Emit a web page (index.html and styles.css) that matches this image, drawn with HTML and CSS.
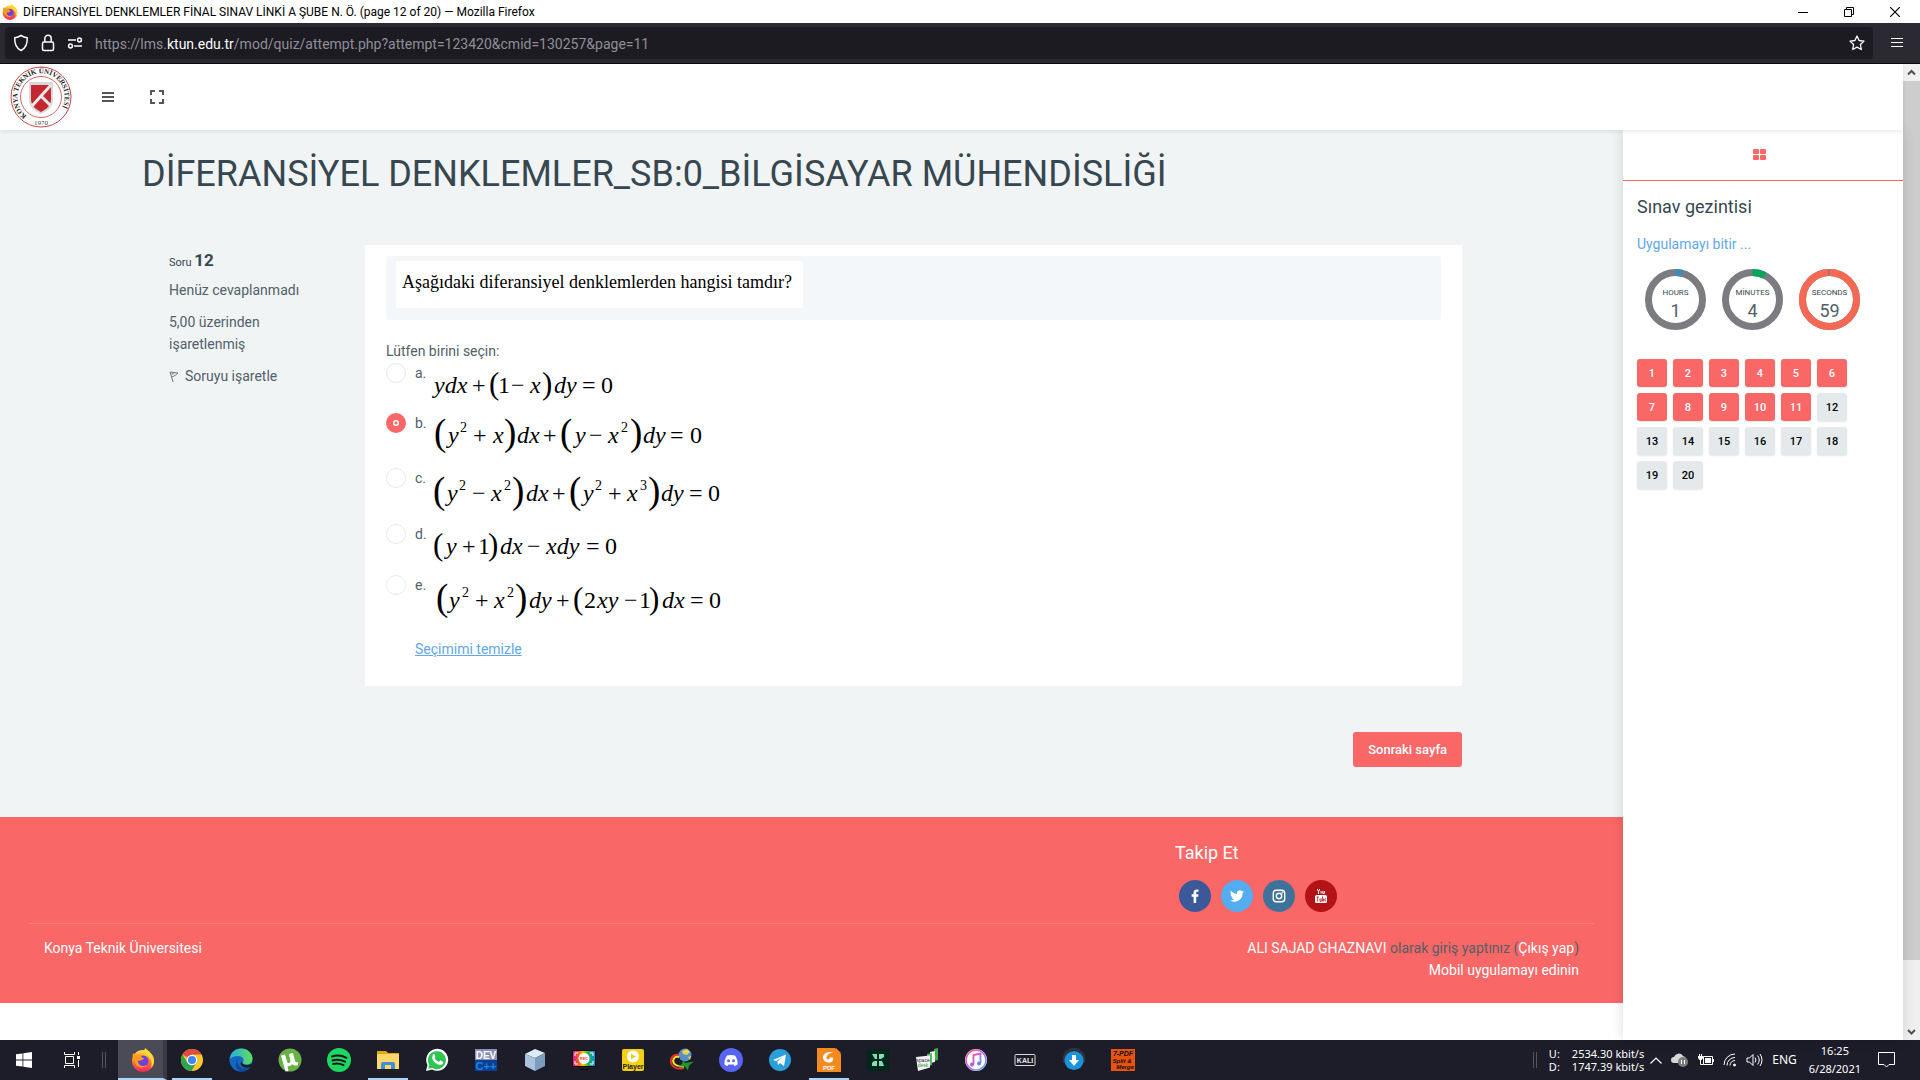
FILE: index.html
```html
<!DOCTYPE html>
<html lang="tr">
<head>
<meta charset="utf-8">
<title>DİFERANSİYEL DENKLEMLER FİNAL SINAV LİNKİ A ŞUBE N. Ö. (page 12 of 20)</title>
<link rel="stylesheet" href="styles.css">
</head>
<body>
<svg class="defs" aria-hidden="true">
  <defs>
    <linearGradient id="ff" x1="0" y1="0" x2="0" y2="1"><stop offset="0" stop-color="#ffe14a"/><stop offset=".45" stop-color="#ff8a16"/><stop offset="1" stop-color="#f0246a"/></linearGradient>
    <linearGradient id="edgeA" x1="0" y1="0" x2="1" y2="0"><stop offset="0" stop-color="#2aa9e8"/><stop offset="1" stop-color="#5fe05a"/></linearGradient>
    <linearGradient id="rainbow" x1="0" y1="0" x2="1" y2="0"><stop offset="0" stop-color="#e2189b"/><stop offset=".25" stop-color="#ff5a1f"/><stop offset=".45" stop-color="#ffc400"/><stop offset=".7" stop-color="#1fb455"/><stop offset="1" stop-color="#1587e0"/></linearGradient>
    <linearGradient id="tunes" x1="0" y1="0" x2="1" y2="1"><stop offset="0" stop-color="#fb4f7c"/><stop offset=".5" stop-color="#c05cf0"/><stop offset="1" stop-color="#41b6f5"/></linearGradient>
    <symbol id="firefox" viewBox="0 0 24 24">
      <circle cx="12" cy="13" r="11" fill="url(#ff)"/>
      <path d="M14 0c4 3 9 7 9 13 0 3-1 5-3 7 2-7-1-11-5-13-2-2-2-5-1-7z" fill="#ffd83a"/>
      <circle cx="12" cy="13" r="5.500" fill="#7040dc"/>
      <path d="M2 5c1 1 2 2 4 2 2-1 4-1 5 0-1 1-1 3 2 3-1 3-4 2-6 3 0 5 5 6 9 4-3 4-10 3-12-2-2-3-3-7-2-10z" fill="#ff9a1c"/>
    </symbol>
  </defs>
</svg>

<header class="titlebar">
  <svg class="app-icon" viewBox="0 0 24 24"><use href="#firefox"/></svg>
  <span class="window-title">DİFERANSİYEL DENKLEMLER FİNAL SINAV LİNKİ A ŞUBE N. Ö. (page 12 of 20) — Mozilla Firefox</span>
  <div class="window-controls">
    <button aria-label="Minimize"><svg width="10" height="10"><path d="M0 5.500h10" stroke="#000"/></svg></button>
    <button aria-label="Restore"><svg width="10" height="10" fill="none" stroke="#000"><path d="M.5 2.500h7v7h-7zM2.500 2.500v-2h7v7h-2"/></svg></button>
    <button aria-label="Close"><svg width="10" height="10"><path d="M0 0l10 10M10 0L0 10" stroke="#000" stroke-width="1.200"/></svg></button>
  </div>
</header>

<div class="toolbar">
  <div class="urlbar">
    <svg width="16" height="18" viewBox="0 0 16 18" fill="none" stroke="#fbfbfe" stroke-width="1.500"><path d="M8 1.500c2 1.300 4 2 6.200 2.200C14.500 9 13 14 8 16.500 3 14 1.500 9 1.800 3.700 4 3.500 6 2.800 8 1.500z"/></svg>
    <svg width="14" height="18" viewBox="0 0 14 18" fill="none" stroke="#fbfbfe" stroke-width="1.500"><rect x="1.500" y="8" width="11" height="8.500" rx="1.500"/><path d="M3.800 8V4.500a3.200 3.200 0 0 1 6.400 0V8"/></svg>
    <svg width="16" height="12" viewBox="0 0 16 12" fill="none" stroke="#fbfbfe" stroke-width="1.500"><path d="M1 3h8M7 9h8"/><circle cx="12.500" cy="3" r="1.900"/><circle cx="3.500" cy="9" r="1.900"/></svg>
    <div class="url">https://lms.<b>ktun.edu.tr</b>/mod/quiz/attempt.php?attempt=123420&amp;cmid=130257&amp;page=11</div>
    <svg class="star" width="16" height="16" viewBox="0 0 16 16" fill="none" stroke="#fbfbfe" stroke-width="1.300" stroke-linejoin="round"><path d="M8 1l2.100 4.500 4.900.6-3.600 3.400.9 5L8 12.100 3.700 14.500l.9-5L1 6.100l4.900-.6z"/></svg>
  </div>
  <button class="app-menu" aria-label="Menu"><svg width="12" height="11"><path d="M0 1.500h12M0 5.500h12M0 9.500h12" stroke="#fbfbfe"/></svg></button>
</div>

<div class="viewport">
  <div class="page">
    <nav class="navbar">
      <svg class="logo" viewBox="0 0 62 62">
        <circle cx="31" cy="31" r="30" fill="#fff" stroke="#c8454d"/>
        <circle cx="31" cy="31" r="20.500" fill="none" stroke="#d2686e"/>
        <path id="ring" d="M17.500 50.500A23.700 23.700 0 1 1 44.500 50.500" fill="none"/>
        <text class="logo-ring"><textPath href="#ring" startOffset="1">KONYA TEKNİK ÜNİVERSİTESİ</textPath></text>
        <text class="logo-year" x="31" y="59" text-anchor="middle">1970</text>
        <path d="M19 16h24v18c0 7-5 11-12 14-7-3-12-7-12-14z" fill="#d8d8da"/>
        <path d="M21 19h20v14c0 6-4 10-10 13-6-3-10-7-10-13z" fill="#c3272f"/>
        <path d="M22 40L41 19M31 30L41 40" stroke="#e9e9ea" stroke-width="3" fill="none"/>
      </svg>
      <button class="nav-btn" aria-label="Menü"><svg width="12" height="10"><path d="M0 1h12M0 5h12M0 9h12" stroke="#555" stroke-width="2"/></svg></button>
      <button class="nav-btn" aria-label="Tam ekran"><svg width="14" height="14" fill="none" stroke="#555" stroke-width="2"><path d="M1 5V1h4M9 1h4v4M13 9v4H9M5 13H1V9"/></svg></button>
    </nav>

    <div class="columns">
      <main class="main">
        <div class="content">
          <h1>DİFERANSİYEL DENKLEMLER_SB:0_BİLGİSAYAR MÜHENDİSLİĞİ</h1>
          <form class="question">
            <section class="info">
              <h3>Soru <b>12</b></h3>
              <p>Henüz cevaplanmadı</p>
              <p>5,00 üzerinden işaretlenmiş</p>
              <p><a class="flag" href="#"><svg width="10" height="13" viewBox="0 0 10 13"><path d="M1 2l8 1-3 2.500L3 7M1 2l3 10" fill="none" stroke="#777"/><path d="M2 2.500l4 .8-3 2z" fill="#aaa"/></svg>Soruyu işaretle</a></p>
            </section>
            <div class="card">
              <div class="formulation"><p>Aşağıdaki diferansiyel denklemlerden hangisi tamdır?</p></div>
              <fieldset>
                <legend>Lütfen birini seçin:</legend>
                <label class="option h50"><input type="radio" name="answer"><span>a.</span>
                  <svg class="math" width="300" height="48"><text y="30"><tspan class="v" x="3">ydx</tspan><tspan x="41">+</tspan><tspan class="p" x="58" y="31">(</tspan><tspan x="67" y="30">1</tspan><tspan x="80">−</tspan><tspan class="v" x="99">x</tspan><tspan class="p" x="111" y="31">)</tspan><tspan class="v" x="123" y="30">dy</tspan><tspan x="151">=</tspan><tspan x="170">0</tspan></text></svg></label>
                <label class="option h55"><input type="radio" name="answer" checked><span>b.</span>
                  <svg class="math" width="300" height="48"><text y="30"><tspan class="q" x="3" y="32">(</tspan><tspan class="v" x="17" y="30">y</tspan><tspan class="s" x="29" y="19">2</tspan><tspan x="42" y="30">+</tspan><tspan class="v" x="62">x</tspan><tspan class="q" x="73" y="32">)</tspan><tspan class="v" x="86" y="30">dx</tspan><tspan x="112">+</tspan><tspan class="q" x="129" y="32">(</tspan><tspan class="v" x="144" y="30">y</tspan><tspan x="158">−</tspan><tspan class="v" x="177">x</tspan><tspan class="s" x="190" y="19">2</tspan><tspan class="q" x="199" y="32">)</tspan><tspan class="v" x="212" y="30">dy</tspan><tspan x="239">=</tspan><tspan x="259">0</tspan></text></svg></label>
                <label class="option h56"><input type="radio" name="answer"><span>c.</span>
                  <svg class="math" width="300" height="48"><text y="33"><tspan class="q" x="2" y="35">(</tspan><tspan class="v" x="16" y="33">y</tspan><tspan class="s" x="28" y="22">2</tspan><tspan x="41" y="33">−</tspan><tspan class="v" x="60">x</tspan><tspan class="s" x="73" y="22">2</tspan><tspan class="q" x="81" y="35">)</tspan><tspan class="v" x="95" y="33">dx</tspan><tspan x="121">+</tspan><tspan class="q" x="138" y="35">(</tspan><tspan class="v" x="152" y="33">y</tspan><tspan class="s" x="164" y="22">2</tspan><tspan x="177" y="33">+</tspan><tspan class="v" x="196">x</tspan><tspan class="s" x="209" y="22">3</tspan><tspan class="q" x="217" y="35">)</tspan><tspan class="v" x="230" y="33">dy</tspan><tspan x="258">=</tspan><tspan x="277">0</tspan></text></svg></label>
                <label class="option h51"><input type="radio" name="answer"><span>d.</span>
                  <svg class="math" width="300" height="48"><text y="30"><tspan class="p" x="2" y="31">(</tspan><tspan class="v" x="15" y="30">y</tspan><tspan x="31">+</tspan><tspan x="47">1</tspan><tspan class="p" x="57" y="31">)</tspan><tspan class="v" x="69" y="30">dx</tspan><tspan x="96">−</tspan><tspan class="v" x="115">xdy</tspan><tspan x="155">=</tspan><tspan x="174">0</tspan></text></svg></label>
                <label class="option h51"><input type="radio" name="answer"><span>e.</span>
                  <svg class="math" width="300" height="48"><text y="33"><tspan class="q" x="5" y="35">(</tspan><tspan class="v" x="18" y="33">y</tspan><tspan class="s" x="31" y="22">2</tspan><tspan x="44" y="33">+</tspan><tspan class="v" x="63">x</tspan><tspan class="s" x="76" y="22">2</tspan><tspan class="q" x="84" y="35">)</tspan><tspan class="v" x="98" y="33">dy</tspan><tspan x="125">+</tspan><tspan class="p" x="142" y="34">(</tspan><tspan x="153" y="33">2</tspan><tspan class="v" x="166">xy</tspan><tspan x="193">−</tspan><tspan x="208">1</tspan><tspan class="p" x="218" y="34">)</tspan><tspan class="v" x="231" y="33">dx</tspan><tspan x="259">=</tspan><tspan x="278">0</tspan></text></svg></label>
              </fieldset>
              <a class="clear" href="#">Seçimimi temizle</a>
            </div>
            <button class="next" type="button">Sonraki sayfa</button>
          </form>
        </div>

        <footer class="footer">
          <div class="follow">
            <h4>Takip Et</h4>
            <div class="social">
              <a class="fb" href="#" aria-label="Facebook"><svg width="14" height="14" viewBox="0 0 14 14"><path d="M10.500.5v2.300H9.200c-.8 0-1 .4-1 1v1.500h2.300l-.3 2.400h-2V14H5.600V7.700h-2V5.300h2V3.500C5.600 1.500 6.900.4 8.700.4c.8 0 1.600.1 1.800.1z" fill="#fff"/></svg></a>
              <a class="tw" href="#" aria-label="Twitter"><svg width="14" height="14" viewBox="0 0 24 24"><path d="M24 4.600c-.9.400-1.800.7-2.800.8 1-.6 1.800-1.600 2.200-2.700-1 .6-2 1-3.100 1.200a4.900 4.900 0 0 0-8.400 4.500C7.700 8.200 4.100 6.300 1.700 3.200a4.900 4.900 0 0 0 1.500 6.600c-.8 0-1.600-.2-2.200-.6v.1a4.900 4.900 0 0 0 3.900 4.800c-.7.200-1.500.2-2.200.1a4.900 4.900 0 0 0 4.600 3.400A9.900 9.900 0 0 1 0 19.500 14 14 0 0 0 21.500 7.100c1-.7 1.800-1.500 2.500-2.500z" fill="#fff"/></svg></a>
              <a class="ig" href="#" aria-label="Instagram"><svg width="14" height="14" viewBox="0 0 14 14" fill="none" stroke="#fff" stroke-width="1.400"><rect x="1.300" y="1.300" width="11.400" height="11.400" rx="3"/><circle cx="7" cy="7" r="2.700"/><circle cx="10.400" cy="3.600" r=".3"/></svg></a>
              <a class="yt" href="#" aria-label="YouTube"><svg width="14" height="16" viewBox="0 0 14 16"><rect x="1" y="7" width="12" height="8" rx="1.500" fill="#fff"/><path d="M3.300 1l1.200 2.700L5.700 1M4.500 3.500V6M7 3v2.500M8.800 3v2.500h1.500V3" stroke="#fff" fill="none"/><path d="M2.500 9h2.300M3.700 9v4.500M6 10.500v3h1.200v-3M8.500 8.500v5M9 11h.8v2H9M11.800 12.800h-.8v-2h.8" stroke="#b31217" stroke-width=".8" fill="none"/></svg></a>
            </div>
          </div>
          <div class="footer-bottom">
            <a href="#">Konya Teknik Üniversitesi</a>
            <div class="login"><a href="#">ALI SAJAD GHAZNAVI</a> olarak giriş yaptınız (<a href="#">Çıkış yap</a>)<br><a href="#">Mobil uygulamayı edinin</a></div>
          </div>
        </footer>
      </main>

      <aside class="drawer">
        <div class="tab"><svg width="13" height="11" fill="#fa6767"><rect width="6" height="5" rx="1"/><rect x="7" width="6" height="5" rx="1"/><rect y="6" width="6" height="5" rx="1"/><rect x="7" y="6" width="6" height="5" rx="1"/></svg></div>
        <div class="drawer-body">
          <h5>Sınav gezintisi</h5>
          <a class="finish" href="#">Uygulamayı bitir ...</a>
          <div class="timer">
            <div class="dial"><svg viewBox="0 0 61 61"><circle cx="30.500" cy="30.500" r="27" stroke="#7a7c80"/><circle cx="30.500" cy="30.500" r="27" stroke="#3c8dbc" pathLength="100" stroke-dasharray="4.200 100"/></svg><span>HOURS</span><strong>1</strong></div>
            <div class="dial"><svg viewBox="0 0 61 61"><circle cx="30.500" cy="30.500" r="27" stroke="#7a7c80"/><circle cx="30.500" cy="30.500" r="27" stroke="#00a65a" pathLength="100" stroke-dasharray="7.500 100"/></svg><span>MİNUTES</span><strong>4</strong></div>
            <div class="dial"><svg viewBox="0 0 61 61"><circle cx="30.500" cy="30.500" r="27" stroke="#7a7c80"/><circle cx="30.500" cy="30.500" r="27" stroke="#f56954" pathLength="100" stroke-dasharray="99.200 100"/></svg><span>SECONDS</span><strong>59</strong></div>
          </div>
          <div class="qnav">
            <a class="done" href="#">1</a><a class="done" href="#">2</a><a class="done" href="#">3</a><a class="done" href="#">4</a><a class="done" href="#">5</a><a class="done" href="#">6</a>
            <a class="done" href="#">7</a><a class="done" href="#">8</a><a class="done" href="#">9</a><a class="done" href="#">10</a><a class="done" href="#">11</a><a href="#">12</a>
            <a href="#">13</a><a href="#">14</a><a href="#">15</a><a href="#">16</a><a href="#">17</a><a href="#">18</a>
            <a href="#">19</a><a href="#">20</a>
          </div>
        </div>
      </aside>
    </div>
  </div>
  <div class="scrollbar">
    <svg width="17" height="17"><path d="M5 10.500l3.500-3.500 3.500 3.500" fill="none" stroke="#505050" stroke-width="2"/></svg>
    <div class="thumb"></div>
    <svg width="17" height="17"><path d="M5 7l3.500 3.500L12 7" fill="none" stroke="#505050" stroke-width="2"/></svg>
  </div>
</div>

<div class="taskbar">
  <div class="sys"><svg width="16" height="16" fill="#fff"><path d="M0 2.300l6.500-.9v6.200H0zM7.300 1.300L16 0v7.600H7.300zM0 8.400h6.500v6.200L0 13.700zM7.300 8.400H16V16l-8.700-1.200z"/></svg></div>
  <div class="sys"><svg width="17" height="16" fill="none" stroke="#fff"><path d="M.5 0v2.500h10V0M.5 16v-2.500h10V16M1.500 4.500h8v7h-8zM14.500 0v3M14.500 8v7"/><path d="M13 4h3v3h-3z" fill="#fff" stroke="none"/></svg></div>
  <div class="grip"></div>
  <div class="apps">
    <div class="app active multi"><svg viewBox="0 0 24 24"><use href="#firefox"/></svg></div>
    <div class="app open"><svg viewBox="0 0 24 24"><circle cx="12" cy="12" r="11" fill="#fbc52e"/><path d="M12 12L2.500 6.500A11 11 0 0 1 21.500 6.500H12z" fill="#e04a3f"/><path d="M2.500 6.500A11 11 0 0 0 11.500 23l4.800-8.500L7.500 15z" fill="#2ea350"/><circle cx="12" cy="12" r="5.200" fill="#fff"/><circle cx="12" cy="12" r="4.100" fill="#4285f4"/></svg></div>
    <div class="app"><svg viewBox="0 0 24 24"><circle cx="12" cy="12" r="11.500" fill="#1269bd"/><path d="M.6 11C1.500 4.500 6.500.5 12 .5c7 0 11.500 5 11.500 10 0 4-3 6-6 6-2.500 0-4-1.500-3.500-2.500 2-3-1-6-5-6-4 0-7 1.500-8.400 3z" fill="url(#edgeA)"/><path d="M9 11c-2 5 2 9.500 7 9.500 3 0 5-1 6-2-2 3-5 5-9 5C7 23 5 16 9 11z" fill="#0c4a9a"/><path d="M13 13c-1 3 3 5.500 9.500 3l1 1-1.500 2c-5 2-10.500 0-10.500-4z" fill="#1d1c29"/></svg></div>
    <div class="app"><svg viewBox="0 0 24 24"><circle cx="12" cy="12" r="11.500" fill="#69b045"/><path d="M3 7.500l4-1 2 7c.5 2 3 2 3.500 0L11 6l4-1 2 8c.5 1.500 2 1.500 3 1v3c-2.500 1-5 .5-6-1-1 2-3 2.500-4.500 2l1 5-3 .5z" fill="#fff"/></svg></div>
    <div class="app"><svg viewBox="0 0 24 24"><circle cx="12" cy="12" r="12" fill="#1ed760"/><path d="M5 8.500c5-1.500 10-1 14.500 1.300M5.500 12.500c4-1.200 8.500-.8 12.500 1.200M6 16c3.500-.8 7-.6 10.500 1.100" fill="none" stroke="#15151c" stroke-width="2" stroke-linecap="round"/></svg></div>
    <div class="app open"><svg viewBox="0 0 24 24"><path d="M1 3h9l2 2h11v16H1z" fill="#e5a50a"/><path d="M1 6h22v15H1z" fill="#ffd76b"/><path d="M5 21v-5q0-2 2-2h10q2 0 2 2v5h-4v-4H9v4z" fill="#3f8fd8"/></svg></div>
    <div class="app"><svg viewBox="0 0 24 24"><path d="M1 23l1.500-6A11 11 0 1 1 7 21.500z" fill="#fff"/><path d="M3.200 20.800l1-4A9 9 0 1 1 7.500 20z" fill="#2fc351"/><path d="M8 6.500c1-1 1.500-.5 2 .8.600 1.500.5 1.500-.5 2.700 1 2 2.500 3.200 4.500 4 1.200-1.500 1.300-1.800 2.500-1 1.800.8 2 1 1.500 2.200-.7 1.800-3 2-5 1.200-3.500-1.400-7.500-5.400-5-9.900z" fill="#fff"/></svg></div>
    <div class="app"><svg viewBox="0 0 24 24"><rect x="1" y="1" width="22" height="12" fill="#8c8fb5"/><rect x="1" y="12" width="22" height="11" fill="#0b3f93"/><text class="t-dev" x="12" y="11" text-anchor="middle">DEV</text><text class="t-cpp" x="12" y="22" text-anchor="middle">C++</text></svg></div>
    <div class="app"><svg viewBox="0 0 24 24"><path d="M2 6l10-5 10 4-10 5z" fill="#dcebf5"/><path d="M2 6l10 4v13L2 18z" fill="#a8c3dc"/><path d="M22 5v13l-10 5V10z" fill="#7d9dbd"/></svg></div>
    <div class="app"><svg viewBox="0 0 24 24"><rect x="0" y="2" width="24" height="17" fill="#0b0b0e"/><rect x="1" y="3" width="22" height="15" fill="url(#rainbow)"/><path d="M3 8V5h3M18 5h3v3M21 13v3h-3M6 16H3v-3" fill="none" stroke="#fff"/><circle cx="12" cy="10.500" r="5.500" fill="#fff"/><text class="t-rec" x="12" y="12" text-anchor="middle">REC</text><path d="M8 21h8v1H8z" fill="#000"/></svg></div>
    <div class="app"><svg viewBox="0 0 24 24"><rect x="1" y="1" width="22" height="22" rx="2" fill="#f5cf16"/><circle cx="12" cy="8.500" r="6" fill="#fff"/><path d="M10 5.500l5 3-5 3z" fill="#f5cf16"/><text class="t-player" x="12" y="21" text-anchor="middle">Player</text></svg></div>
    <div class="app"><svg viewBox="0 0 24 24"><circle cx="15" cy="7" r="6.500" fill="#5a8fc8"/><path d="M12 3l5-2 3 3-3 3-4-1zM18 9l3-1-1 4z" fill="#e8d84a"/><path d="M9 7C2 6-1 12 2 17c3 4 8 4 12 3" fill="none" stroke="#e5312b" stroke-width="2"/><path d="M9 9C4 8 2 12 4 15.500c2 3 6 3 10 3" fill="none" stroke="#f6e22f" stroke-width="2"/><path d="M13 12l2 3 9-1.500-5 4-1 5-3-4-8 0c4-1 6-3 6-6.500z" fill="#1c9a2c"/></svg></div>
    <div class="app"><svg viewBox="0 0 24 24"><circle cx="12" cy="12" r="12" fill="#5865f2"/><path d="M8 7.500c2.500-.7 5.500-.7 8 0 2 3 3 6 2.500 9-1 .8-2 1.200-3 1.500l-1-1.500h-5l-1 1.500c-1 0-2-.6-3-1.500-.3-3 .5-6 2.500-9z" fill="#fff"/><circle cx="9.500" cy="12.800" r="1.500" fill="#5865f2"/><circle cx="14.500" cy="12.800" r="1.500" fill="#5865f2"/></svg></div>
    <div class="app"><svg viewBox="0 0 24 24"><circle cx="12" cy="12" r="11" fill="#2a9fda"/><path d="M5 12l13-5.500L16 18l-4-3-2 2-.7-3.500L15 9l-7 4z" fill="#fff"/></svg></div>
    <div class="app open"><svg viewBox="0 0 24 24"><path d="M0 0h18l6 6v18H0z" fill="#f58a1f"/><path d="M19 0l5 5h-5z" fill="#f58a1f"/><path d="M16.500 4.500C10 2.500 6 6 6 9.500S9.500 15 13 14.500c3-.5 3.500-3 3-5h-4c1 0 1 1.500 0 2-2 .5-3-1-2.500-2.500C10 6.500 13 5 16.500 4.500z" fill="#fff"/><text class="t-pdf" x="12" y="22" text-anchor="middle">PDF</text></svg></div>
    <div class="app"><svg viewBox="0 0 24 24"><rect x="1" y="1" width="22" height="22" rx="3" fill="#02261c"/><path d="M6 6h5v5H9zM18 6h-5v5h2l3-2zM6 18h5v-5H8l-2 2zM18 18h-5v-5h3z" fill="#7be0b6"/></svg></div>
    <div class="app"><svg viewBox="0 0 24 24"><path d="M19 1l4-1v12l-4 1z" fill="#3cae46"/><path d="M15 4l5-1v11l-5 1z" fill="#fff"/><path d="M12 6l5-1v12l-5 1z" fill="#58b85f"/><path d="M1 9l14-1.500v12L3 23z" fill="#f2f2f2"/><text class="t-space" x="8" y="14" text-anchor="middle">space</text><text class="t-desk" x="8" y="19" text-anchor="middle">desk</text></svg></div>
    <div class="app"><svg viewBox="0 0 24 24"><circle cx="12" cy="12" r="11" fill="#fff"/><circle cx="12" cy="12" r="10" fill="none" stroke="url(#tunes)" stroke-width="1.500"/><path d="M9.500 16V7l7-1.500V15" fill="none" stroke="url(#tunes)" stroke-width="1.800"/><circle cx="8" cy="16.500" r="2" fill="#a85cf0"/><circle cx="15" cy="15.500" r="2" fill="#6a7cf0"/></svg></div>
    <div class="app"><svg viewBox="0 0 24 24"><rect x="2" y="6.500" width="20" height="11" rx="1" fill="none" stroke="#d8d8dc"/><text class="t-kali" x="12" y="15" text-anchor="middle">KALI</text></svg></div>
    <div class="app"><svg viewBox="0 0 24 24"><path d="M2 15V11a10 10 0 0 1 20 0v4" fill="none" stroke="#30343c" stroke-width="2.500"/><circle cx="12" cy="12.500" r="9.500" fill="#1b93dc"/><path d="M10 7h4v5h3l-5 6-5-6h3z" fill="#fff"/></svg></div>
    <div class="app"><svg viewBox="0 0 24 24"><rect y="1" width="24" height="22" fill="#e8530f"/><text class="t-seven" x="12" y="8" text-anchor="middle">7-PDF</text><text class="t-split" x="11" y="15" text-anchor="middle">Split &amp;</text><text class="t-split" x="14" y="21" text-anchor="middle">Merge</text></svg></div>
  </div>
  <div class="tray">
    <div class="grip"></div>
    <div class="net"><span>U:</span><span>2534.30 kbit/s</span><span>D:</span><span>1747.39 kbit/s</span></div>
    <svg width="12" height="7"><path d="M.5 6.500L6 1l5.500 5.500" fill="none" stroke="#fff" stroke-width="1.200"/></svg>
    <svg width="18" height="16"><path d="M3 11a3 3 0 0 1 0-6 5 5 0 0 1 9-1 4 4 0 0 1 2 7z" fill="#d7d7da"/><circle cx="12" cy="10" r="5" fill="#7d7d80"/><path d="M10.500 8v4M13.500 8v4" stroke="#fff"/></svg>
    <svg width="16" height="12" fill="none" stroke="#fff"><path d="M5.500 2.500h9v8h-9zM15.500 5v3M2.500 6v4.500h3M1.500 0v2M3.500 0v2"/><path d="M7 4h6v5H7zM0 2h5v2L3.500 6h-2L0 4z" fill="#fff" stroke="none"/></svg>
    <svg width="14" height="14" fill="none" stroke="#fff"><path d="M1 12A11 11 0 0 1 12 1M4 12.500a8 8 0 0 1 8-8M7 12.500a5 5 0 0 1 5-5"/><circle cx="11.500" cy="12" r="1" fill="#fff"/></svg>
    <svg width="17" height="14" fill="none" stroke="#fff"><path d="M1 5h2.500L7 1.500v11L3.500 9H1zM9 4.500q2 2.500 0 5M11.500 2.500q3.500 4.500 0 9M14 1q4 6 0 12"/></svg>
    <span class="lang">ENG</span>
    <div class="clock"><span>16:25</span><span>6/28/2021</span></div>
    <svg class="note" width="17" height="16" fill="none" stroke="#fff"><path d="M.5.500h16v12h-5.500L8.500 15 6 12.500H.5z"/></svg>
  </div>
</div>
</body>
</html>
```
FILE: styles.css
```css
* { box-sizing: border-box; }
html, body { height: 100%; margin: 0; }
body { display: flex; flex-direction: column; overflow: hidden; font: 14px/22px Roboto, sans-serif; color: #526069; background: #fff; }
button { border: 0; background: none; padding: 0; font: inherit; color: inherit; }
a { color: #62a8ea; text-decoration: none; }
h1, h3, h4, h5, p { margin: 0; font-weight: 400; color: #37474f; }
svg { display: block; flex: none; }
.defs { position: absolute; width: 0; height: 0; }

.titlebar { display: flex; align-items: center; gap: 5px; height: 23px; padding: 0 2px; color: #000; font: 12px/16px Roboto, sans-serif; flex: none; }
.app-icon { width: 16px; height: 16px; }
.window-title { flex: 1; }
.window-controls { display: flex; height: 20px; }
.window-controls button { width: 46px; display: grid; place-items: center; }

.toolbar { display: flex; align-items: center; height: 41px; padding: 0 0 1px 5px; background: #2b2a33; border-bottom: 1px solid #0c0c0d; flex: none; }
.urlbar { flex: 1; height: 32px; display: flex; align-items: center; gap: 12px; padding: 0 8px; border-radius: 4px; background: #1c1b22; }
.url { flex: 1; padding-top: 2px; font: 14px/20px Roboto, sans-serif; color: #8f8f98; }
.url b { font-weight: 400; color: #fbfbfe; }
.app-menu { width: 47px; display: grid; place-items: center; }

.viewport { flex: 1; min-height: 0; display: flex; }
.page { flex: 1; display: flex; flex-direction: column; min-width: 0; }
.navbar { height: 66px; flex: none; display: flex; align-items: center; padding-left: 10px; background: #fff; box-shadow: 0 2px 4px rgba(0,0,0,.08); z-index: 2; }
.logo { width: 62px; height: 62px; margin-right: 11px; }
.logo-ring { font: 700 7px "Liberation Serif", serif; fill: #222; }
.logo-year { font: 7px "Liberation Serif", serif; fill: #444; }
.nav-btn { width: 49px; height: 40px; display: grid; place-items: center; }
.columns { flex: 1; display: flex; min-height: 0; }
.main { flex: 1; min-width: 0; }
.content { background: #f0f4f5; padding: 21px 161px 50px 142px; }
h1 { font-size: 36px; line-height: 46px; color: #37474f; }
.question { display: grid; grid-template-columns: 223px 1fr; padding-top: 48px; }
.info { padding: 3px 60px 0 27px; }
.info h3 { font-size: 11px; line-height: 24px; margin-bottom: 4px; }
.info b { font-size: 17px; font-weight: 700; }
.info p { color: #526069; margin-bottom: 10px; }
.flag { display: flex; align-items: center; gap: 6px; color: #526069; }
.card { background: #fff; padding: 11px 21px 26px; }
.formulation { background: #f3f7fa; border-radius: 3px; padding: 5px 10px 12px; margin-bottom: 20px; }
.formulation p { width: max-content; min-width: 407px; height: 47px; padding: 9px 6px; background: #fff; color: #000; font: 18px/24px "Liberation Serif", serif; }
fieldset { border: 0; margin: 0; padding: 0; min-width: 0; }
legend { padding: 0; }
.option { display: flex; align-items: flex-start; gap: 9px; }
.option span { width: 14px; }
.option input { appearance: none; width: 20px; height: 20px; margin: 1px 0 0; border: 1px solid #e4eaec; border-radius: 50%; background: #fff; flex: none; }
.option input:checked { border: 7px solid #fa6767; background: radial-gradient(circle, #fa6767 1px, #fff 2px); }
.math { margin: 1px 0 0 -7px; overflow: visible; }
.math text { font: 24px "Liberation Serif", serif; fill: #000; }
.math .v { font-style: italic; }
.math .s { font-size: 14px; }
.math .p { font-size: 31px; }
.math .q { font-size: 37px; }
.h50 { height: 50px; }
.h51 { height: 51px; }
.h55 { height: 55px; }
.h56 { height: 56px; }
.clear { display: block; width: max-content; margin: 13px 0 0 29px; text-decoration: underline; }
.next { grid-column: 2; justify-self: end; margin-top: 46px; padding: 0 15px; height: 35px; border-radius: 3px; background: #fa6767; color: #fff; font-size: 13px; font-weight: 500; }

.footer { background: #fa6767; padding: 24px 29px 22px; color: #526069; }
.footer a { color: #fff; }
.follow { margin-left: 1146px; padding-bottom: 11px; }
.follow h4 { font-size: 18px; line-height: 24px; color: #fff; }
.social { display: flex; gap: 10px; padding: 15px 0 0 4px; }
.social a { width: 32px; height: 32px; border-radius: 50%; display: grid; place-items: center; }
.fb { background: #3b5998; }
.tw { background: #55acee; }
.ig { background: #3f729b; }
.yt { background: #b31217; }
.footer-bottom { display: flex; justify-content: space-between; border-top: 1px solid #fb7e7e; padding: 13px 15px 0; }
.login { text-align: right; }

.drawer { width: 280px; flex: none; background: #fff; box-shadow: 0 0 12px rgba(0,0,0,.14); z-index: 1; }
.tab { height: 51px; display: grid; place-items: center; padding: 0 8px 2px 0; border-bottom: 1px solid #fa6767; }
.drawer-body { padding: 14px; }
h5 { font-size: 18px; line-height: 24px; }
.finish { display: block; margin-top: 14px; }
.timer { display: flex; gap: 16px; padding: 14px 8px 0; }
.dial { position: relative; width: 61px; height: 61px; text-align: center; padding-top: 18px; color: #526069; }
.dial svg { position: absolute; inset: 0; transform: rotate(-90deg); }
.dial circle { fill: none; stroke-width: 7; }
.dial span { display: block; font-size: 8px; line-height: 12px; color: #37474f; }
.dial strong { display: block; font-size: 18px; line-height: 24px; font-weight: 400; }
.qnav { display: flex; flex-wrap: wrap; gap: 6px; margin-top: 29px; width: 216px; }
.qnav a { width: 30px; height: 28px; border-radius: 3px; background: #e4eaec; color: #000; font-size: 11px; line-height: 29px; font-weight: 500; text-align: center; box-shadow: 0 1px 2px rgba(0,0,0,.1); }
.qnav .done { background: #fa6767; color: #fff; }

.scrollbar { width: 17px; flex: none; display: flex; flex-direction: column; background: #f0f0f0; }
.thumb { flex: 0 1 879px; margin-bottom: auto; background: #cdcdcd; }

.taskbar { height: 40px; flex: none; display: flex; align-items: center; background: #1d1c29; color: #fff; font: 11px/16px "Noto Sans", sans-serif; }
.sys { width: 48px; display: grid; place-items: center; }
.grip { width: 4px; height: 16px; border: solid #55555f; border-width: 0 1px; }
.taskbar > .grip { margin: 0 12px 0 6px; }
.apps { display: flex; align-self: stretch; }
.app { width: 49px; padding: 8px 12px 6px; }
.app svg { width: 24px; height: 24px; margin: auto; }
.open { background: linear-gradient(#a9d8f6, #a9d8f6) center bottom / 40px 2px no-repeat; }
.active { background: #4b4a57; border-bottom: 2px solid #a9d8f6; padding-bottom: 4px; }
.multi { border-right: 4px solid #3a3945; padding-right: 8px; }
.tray { margin-left: auto; display: flex; align-items: center; padding-right: 25px; }
.net { display: grid; grid-template-columns: 23px auto; line-height: 13px; margin: 0 6px 0 12px; }
.tray svg { margin-right: 9px; }
.lang { font-size: 12px; margin-right: 12px; }
.clock { display: flex; flex-direction: column; align-items: center; line-height: 18px; margin-right: 17px; }
.tray .note { margin-right: 0; }

.t-dev { font: 700 10px "Liberation Sans", sans-serif; fill: #fff; }
.t-cpp { font: 700 11px "Liberation Sans", sans-serif; fill: #1788ee; }
.t-rec { font: 700 4px "Liberation Sans", sans-serif; fill: #e33; }
.t-player { font: 700 7px "Liberation Sans", sans-serif; fill: #222; }
.t-pdf { font: 700 6px "Liberation Sans", sans-serif; fill: #fff; }
.t-space { font: 5px "Liberation Sans", sans-serif; fill: #333; }
.t-desk { font: 5px "Liberation Sans", sans-serif; fill: #2a9a3a; }
.t-kali { font: 700 7px "Liberation Sans", sans-serif; fill: #e8e8ec; }
.t-seven { font: italic 700 7px "Liberation Sans", sans-serif; fill: #111; }
.t-split { font: italic 700 6px "Liberation Sans", sans-serif; fill: #111; }
```
